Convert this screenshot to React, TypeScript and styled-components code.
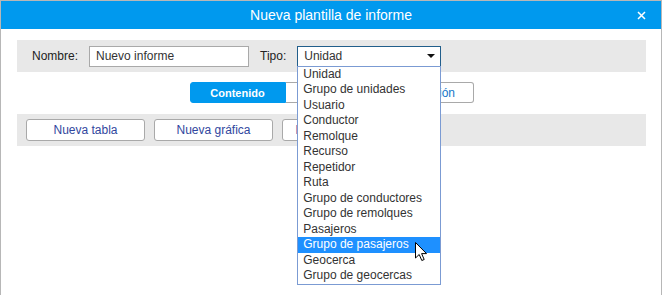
import React from 'react';
import styled, { createGlobalStyle } from 'styled-components';

const GlobalStyle = createGlobalStyle`
  html, body {
    margin: 0;
    padding: 0;
    background: #ffffff;
  }

  body {
    font-family: 'Liberation Sans', Arial, sans-serif;
    font-size: 12px;
    color: #333333;
  }
`;

const Window = styled.div`
  width: 662px;
  height: 295px;
  box-sizing: border-box;
  border: 1px solid #b7b7b7;
  border-bottom: none;
  background: #ffffff;
  overflow: hidden;
`;

const Header = styled.header`
  height: 28px;
  background: #0099ee;
  color: #ffffff;
  display: grid;
  grid-template-columns: 1fr auto 1fr;
  align-items: center;
  font-size: 14px;
`;

const Title = styled.div`
  grid-column: 2;
  line-height: 28px;
`;

const CloseButton = styled.button`
  grid-column: 3;
  justify-self: end;
  margin-right: 15px;
  width: 10px;
  height: 10px;
  padding: 0;
  border: none;
  background: transparent;
  display: flex;
  align-items: center;
  justify-content: center;
`;

const Body = styled.div`
  padding: 11px 15px 0 16px;
`;

const Panel = styled.section<{ $pad: number }>`
  height: 32px;
  background: #e8e8e8;
  display: flex;
  align-items: center;
  padding-left: ${({ $pad }) => $pad}px;
`;

const FieldRow = styled.div`
  display: flex;
  align-items: center;
  gap: 11px;
`;

const Label = styled.span`
  color: #222222;
`;

const TextInput = styled.div`
  width: 160px;
  height: 21px;
  box-sizing: border-box;
  border: 1px solid #a9a9a9;
  background: #ffffff;
  padding: 0 6px;
  line-height: 19px;
  color: #333333;
`;

const SelectBox = styled.div`
  position: relative;
  width: 144px;
  height: 21px;
  box-sizing: border-box;
  border: 1px solid #215e8b;
  background: #ffffff;
  display: flex;
  align-items: center;
  justify-content: space-between;
  padding: 0 5px 0 6px;
  line-height: 19px;
  color: #333333;
`;

const Arrow = styled.span`
  width: 0;
  height: 0;
  border-left: 4px solid transparent;
  border-right: 4px solid transparent;
  border-top: 4px solid #111111;
`;

const Dropdown = styled.ul`
  position: absolute;
  top: 100%;
  left: -1px;
  width: 144px;
  box-sizing: border-box;
  margin: 0;
  padding: 0;
  list-style: none;
  border: 1px solid #7b9bd3;
  background: #ffffff;
  z-index: 5;
`;

const Option = styled.li<{ $active?: boolean }>`
  height: 15.5px;
  line-height: 15.5px;
  padding: 0 5px;
  white-space: nowrap;
  color: ${({ $active }) => ($active ? '#ffffff' : '#333333')};
  background: ${({ $active }) => ($active ? '#1e90ff' : 'transparent')};
`;

const Cursor = styled.svg`
  position: absolute;
  left: 117px;
  top: 175px;
`;

const Tabs = styled.nav`
  display: flex;
  justify-content: center;
  margin: 10px 0 11px;
`;

const Tab = styled.button<{ $active?: boolean; $width: number }>`
  width: ${({ $width }) => $width}px;
  height: 21px;
  box-sizing: border-box;
  margin: 0;
  padding: 0;
  font-family: inherit;
  font-size: ${({ $active }) => ($active ? '11px' : '12px')};
  font-weight: ${({ $active }) => ($active ? 'bold' : 'normal')};
  border: 1px solid ${({ $active }) => ($active ? '#0099ee' : '#a9a9a9')};
  border-left-width: ${({ $active }) => ($active ? '1px' : '0')};
  background: ${({ $active }) => ($active ? '#0099ee' : '#ffffff')};
  color: ${({ $active }) => ($active ? '#ffffff' : '#1677c9')};

  &:first-child {
    border-radius: 3px 0 0 3px;
  }

  &:last-child {
    border-radius: 0 3px 3px 0;
  }
`;

const ToolButton = styled.button`
  width: 119px;
  height: 22px;
  box-sizing: border-box;
  margin: 0;
  padding: 0;
  border: 1px solid #a9a9a9;
  border-radius: 3px;
  background: #ffffff;
  font-family: inherit;
  font-size: 12px;
  color: #31479e;
`;

const ButtonRow = styled.div`
  display: flex;
  gap: 9px;
`;

const tipos = [
  'Unidad',
  'Grupo de unidades',
  'Usuario',
  'Conductor',
  'Remolque',
  'Recurso',
  'Repetidor',
  'Ruta',
  'Grupo de conductores',
  'Grupo de remolques',
  'Pasajeros',
  'Grupo de pasajeros',
  'Geocerca',
  'Grupo de geocercas',
];

const App = () => {
  return (
    <>
      <GlobalStyle />
      <Window>
        <Header>
          <Title>Nueva plantilla de informe</Title>
          <CloseButton aria-label="Cerrar">
            <svg width="9" height="9" viewBox="0 0 9 9">
              <path
                d="M1 1 L8 8 M8 1 L1 8"
                stroke="#ffffff"
                strokeWidth="1.5"
                fill="none"
              />
            </svg>
          </CloseButton>
        </Header>
        <Body>
          <Panel $pad={15}>
            <FieldRow>
              <Label>Nombre:</Label>
              <TextInput>Nuevo informe</TextInput>
              <Label>Tipo:</Label>
              <SelectBox>
                <span>Unidad</span>
                <Arrow />
                <Dropdown>
                  {tipos.map((t) => (
                    <Option key={t} $active={t === 'Grupo de pasajeros'}>
                      {t}
                    </Option>
                  ))}
                  <Cursor width="13" height="20" viewBox="0 0 13 20">
                    <path
                      d="M0.5 0.5 L0.5 16 L4.2 12.5 L6.8 18.5 L9.2 17.5 L6.6 11.6 L11.5 11.6 Z"
                      fill="#ffffff"
                      stroke="#000000"
                      strokeWidth="1"
                      strokeLinejoin="round"
                    />
                  </Cursor>
                </Dropdown>
              </SelectBox>
            </FieldRow>
          </Panel>
          <Tabs>
            <Tab $active $width={96}>
              Contenido
            </Tab>
            <Tab $width={100}>Parámetros</Tab>
            <Tab $width={88}>Selección</Tab>
          </Tabs>
          <Panel $pad={9}>
            <ButtonRow>
              <ToolButton>Nueva tabla</ToolButton>
              <ToolButton>Nueva gráfica</ToolButton>
              <ToolButton>Nuevo separador</ToolButton>
            </ButtonRow>
          </Panel>
        </Body>
      </Window>
    </>
  );
};

export default App;
